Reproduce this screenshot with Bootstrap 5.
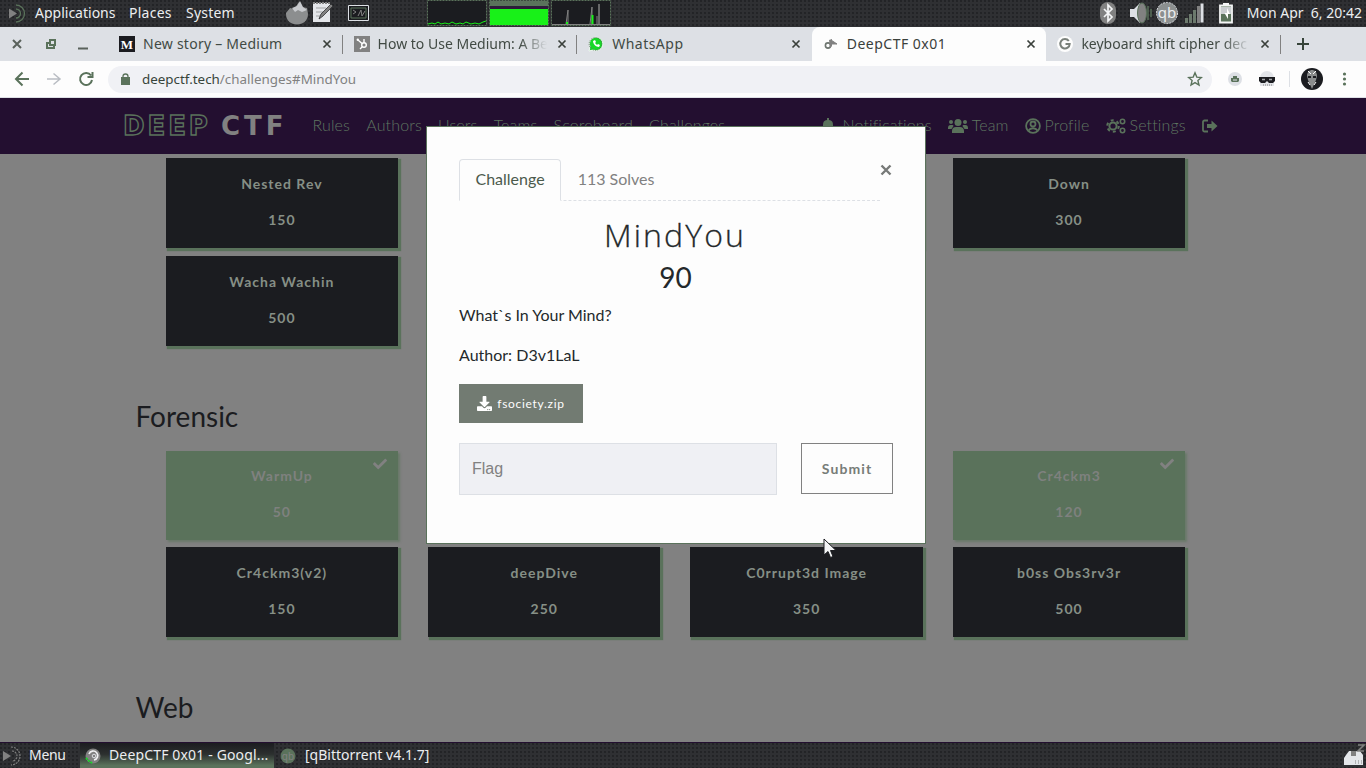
<!DOCTYPE html>
<html lang="en">
<head>
<meta charset="utf-8">
<title>DeepCTF 0x01</title>
<link href="https://cdn.jsdelivr.net/npm/bootstrap@5.3.0/dist/css/bootstrap.min.css" rel="stylesheet">
<script src="https://cdn.jsdelivr.net/npm/bootstrap@5.3.0/dist/js/bootstrap.bundle.min.js"></script>
<style>
:root{--ink:#1b1c20;--panel:#2f3033;--strip:#dde0e5;--dim:#818181;--moss:#5a725b;--plum:#230f30;--paper:#fdfdfd}
body{width:1366px;height:768px;overflow:hidden;background:var(--dim);font-family:Lato,sans-serif;color:var(--ink);line-height:1.5;position:relative}
svg{display:block;flex:none}
.sysfont{font-family:"Noto Sans",sans-serif}
.desk-panel{background-color:var(--panel);background-image:radial-gradient(circle at 1px 1px,#222326 .7px,transparent .9px);background-size:4px 4px;color:#eceef0;font-size:14px;line-height:20px;white-space:nowrap}
.top-panel{height:27px;padding:0 4px 2px 7px}
.menu-a{width:94px}.menu-b{width:57px;letter-spacing:.25px}.menu-c{width:100px;letter-spacing:.2px}
.graphs{margin-left:57px}
.tray{margin-left:auto;margin-right:13px}

.tab-strip{height:34px;background:var(--strip);font-size:14px;line-height:20px;color:#414a44;white-space:nowrap}
.tab-item{width:234.6px;height:34px;padding-left:11px;gap:8px;position:relative}
.tab-item .tab-text{width:169px;overflow:hidden;padding-bottom:1px}
.tab-item .tab-close{margin-left:2px}
.tab-item.ruled::after{content:"";position:absolute;right:0;top:8px;width:1px;height:19px;background:var(--dim)}
.tab-active{background:var(--paper);border-radius:8px 8px 0 0;color:#3a403b}
.wide-a{letter-spacing:.25px}.wide-b{letter-spacing:.48px}
.fade-end{-webkit-mask-image:linear-gradient(90deg,#000 84%,transparent);mask-image:linear-gradient(90deg,#000 84%,transparent)}

.toolbar{height:37px;background:var(--paper);border-bottom:1px solid var(--strip);font-size:13.4px}
.omni{width:1104px;height:27px;border-radius:14px;background:#f0f1f5;color:var(--dim);line-height:20px;padding-left:13px;padding-right:9px}
.omni .url{margin-left:12px}
.omni .host{color:#37443a}

.view{height:644px;overflow:hidden}
.site-nav{height:56px;background:var(--plum);color:#5f7660;font-size:16px;line-height:24px;font-weight:300;white-space:nowrap;letter-spacing:.14px;padding-bottom:2px}
.site-logo{width:312.5px;padding:2px 0 0 123px;font:700 26px/28px "DejaVu Sans",sans-serif}
.logo-deep{width:98px;letter-spacing:2.9px;color:transparent;-webkit-text-stroke:1.4px var(--moss)}
.logo-ctf{letter-spacing:4px;color:var(--dim)}
.nav-main{gap:16.2px;width:508px}
.nav-right svg{margin-top:1px}
.bell-gap{margin-left:8px}.gears{margin-left:16px}

.board{padding-left:150.7px;width:1201px;flex-wrap:nowrap}
.cell{width:262.4px;padding:0 15px}
.tile{height:90px;background:var(--ink);color:#868f86;box-shadow:2px 2px 1px 1px var(--moss);font-weight:700;font-size:14px;letter-spacing:1px;line-height:20px;padding-top:16px;text-align:center;margin-bottom:8px}
.tile p{margin:0 0 16px}
.tile-done{background:var(--moss);color:#7f817f;position:relative;height:89px;margin-bottom:7px;padding-top:15px;box-shadow:2px 2px 2px #697969}
.tile-done svg{position:absolute;right:11px;top:6px}
.cat{font-size:28px;line-height:34px;margin:45px 0 18px 135.5px;font-weight:400}

.chal{position:absolute;left:427px;top:127px;width:498px;height:416px;background:var(--paper);border-radius:0;border:0;box-shadow:0 0 0 1px var(--moss);padding:32px;color:#24292b}
.chal .nav-tabs{width:421px;border-bottom:1px dashed var(--strip);height:42px}
.chal .nav-link{height:42px;padding:7px 15.5px;color:var(--dim);line-height:24px;font-size:16px;border-radius:4px 4px 0 0}
.chal .nav-link.active{color:#4b5a4c;background:var(--paper);border:1px solid var(--strip);border-bottom-color:var(--paper)}
.close-x{position:absolute;right:33px;top:37px}
.ttl{font:300 32px/40px "Open Sans",sans-serif;letter-spacing:2.1px;margin:14px 0 5px;padding-right:2px;-webkit-text-stroke:.3px #24292b}
.pts{font-size:28px;line-height:34px;margin-bottom:9px;font-weight:400;padding-right:1px}
.chal p{font-size:16px;line-height:24px;margin-bottom:16px}
.dl{background:#727b72;color:var(--paper);width:124px;height:39px;font-size:12px;letter-spacing:.7px;gap:5px;margin:17px 0 20px}
.flag-input{width:318px;height:52px;background:#eff0f4;border:1px solid var(--strip);border-radius:0;padding:0 12px;font:16px/24px "Liberation Sans",sans-serif}
.flag-input::placeholder{color:var(--dim)}
.send{width:92px;height:51px;border:1px solid var(--dim);border-radius:0;color:#777c78;font-weight:700;font-size:14px;letter-spacing:1.1px;padding:0}
.pointer{position:absolute;left:822.500px;top:537.500px}

.bottom-panel{height:26px;border-top:1px solid var(--plum)}
.bottom-panel .lbl{padding-bottom:2px}
.task-menu{width:51px;letter-spacing:-.3px}
.task{width:194px;height:25px;padding-left:5px;gap:8px;letter-spacing:.15px;background:linear-gradient(#1b1c20,#2c302f 45%,#5a725b 90%)}
.task-b{margin-left:6px;gap:9px}
</style>
</head>
<body>

<div class="desk-panel top-panel sysfont d-flex align-items-center">
  <svg width="28" height="20" viewBox="0 0 28 20"><path d="M2 5.500v10l8-5z" fill="#818181"/><path d="M9 2a8 8 0 1 1 0 17M9 6a4.500 4.500 0 1 1 0 9" fill="none" stroke="#5a725b" stroke-width="1.300"/></svg>
  <div class="menu-a">Applications</div><div class="menu-b">Places</div><div class="menu-c">System</div>
  <svg width="84" height="26" viewBox="286 0 84 26"><path d="M286 13l4-5 4 1 5-7 3 5 5 1 1 6c0 14-22 14-22 0z" fill="#8c8e8f"/><path d="M292 8l5-2 3-5 3 6 4 3-5 2-4-2-3 2z" fill="#c8cace"/><path d="M313 3h17v19h-17z" fill="#e4e6ea"/><path d="M313 3h17" stroke="#818181" stroke-width="2" stroke-dasharray="2 1"/><path d="M316 8h10m-10 4h7m-7 4h4" stroke="#a0a2a4"/><path d="M319 19l2-5 10-10 2 2-10 10z" fill="#818181" stroke="#2d2e31" stroke-width=".8"/><path d="M348.500 5.500h20v15h-20z" fill="#1b1c20" stroke="#dde0e5"/><path d="M351 8h15v10h-15z" fill="none" stroke="#5a725b"/><path d="M353 10l3 2-3 2m5 2l3-6 1 6 3-5" stroke="#818181" fill="none"/></svg>
  <svg class="graphs" width="184" height="26" viewBox="427 0 184 26"><path d="M427.500.5h59v25h-59zM489.500.5h59v25h-59zM551.500.5h59v25h-59z" fill="#1b1c20" stroke="#5a725b" stroke-dasharray="2 1"/><path d="M490 1h58v5h-58z" fill="#5a725b"/><path d="M490 6h58v3h-58z" fill="#2c1b39"/><path d="M490 9h58v16h-58z" fill="#18f118"/><path d="M428 24l4-1 3 1 3-2 3 2 4-1 4 1 3-2 4 2 4-1 3 1 3-2 5 2 4-1 4 1 4-2 3-1" stroke="#18f118" fill="none"/><path d="M552 24.500h58M566 24l2-14v14m22 0l2-17v17m5 0v-8m2 8V4v20" stroke="#818181" fill="none"/><path d="M591.500 15h2v9h-2zM566 22h2v2h-2z" fill="#18f118"/></svg>
  <svg class="tray" width="136" height="26" viewBox="1098 0 136 26">
    <rect x="1100" y="2" width="16" height="22" rx="8" fill="#818181"/><path d="M1104 9l8 8-4 4V5l4 4-8 8" fill="none" stroke="#f4f5f6" stroke-width="1.700"/>
    <path d="M1130 9h4l6-6v20l-6-6h-4z" fill="#dde0e5"/><ellipse cx="1142" cy="13" rx="4.500" ry="10" fill="#818181" stroke="#5a725b"/><path d="M1148 6v14m3-11v8" stroke="#5a725b" stroke-width="1.400"/>
    <circle cx="1167" cy="13" r="10.500" fill="#8c9090" stroke="#dde0e5" stroke-dasharray="2 1"/><text x="1167" y="18" text-anchor="middle" font-family="Noto Sans" font-size="15" fill="#eceef0">qb</text>
    <path d="M1185 18h3v5h-3zM1189 14h3v9h-3zM1193 10h3v13h-3z" fill="#6c7a6d"/><path d="M1197 6h3v17h-3z" fill="#818181"/><path d="M1200.500 3.500h3v19h-3z" fill="#dde0e5"/>
    <path d="M1220 5.500h12v17h-12z" fill="#5a725b" stroke="#f4f5f6" stroke-width="1.800"/><path d="M1223 3h6v2h-6z" fill="#f4f5f6"/><path d="M1221 7h10v7h-10z" fill="#c9ccd0"/><path d="M1227 8v5h-2.500l3.500 6v-5h2z" fill="#fff"/>
  </svg>
  <div>Mon Apr&nbsp; 6, 20:42</div>
</div>

<div class="tab-strip sysfont d-flex">
  <svg width="108" height="34" viewBox="0 27 108 34"><path d="M13 40l8 8m0-8l-8 8M78 48.500h10" stroke="#5a625c" stroke-width="2"/><path d="M50 40h5v5h-5zM49 43h-2v5h7v-2" fill="none" stroke="#5a725b" stroke-width="2"/></svg>
  <div class="tab-item ruled d-flex align-items-center"><svg width="16" height="16"><path d="M0 0h16v16H0z" fill="#1b1c20"/><text x="8" y="12.500" font-family="Liberation Serif" font-weight="bold" font-size="13" text-anchor="middle" fill="#fff">M</text></svg><div class="tab-text wide-a">New story – Medium</div><svg class="tab-close" width="10" height="10"><path d="M1.500 1.500l7 7m0-7l-7 7" stroke="#3a403b" stroke-width="1.700"/></svg></div>
  <div class="tab-item ruled d-flex align-items-center"><svg width="16" height="16"><path d="M0 0h16v16H0z" fill="#818181"/><circle cx="10" cy="9" r="2.300" fill="none" stroke="#fff" stroke-width="1.400"/><path d="M10 6.500V3M4 4l4 3.500M8.500 10.500L6 13" stroke="#fff" stroke-width="1.400"/><circle cx="3.800" cy="3.800" r="1.200" fill="#fff"/></svg><div class="tab-text fade-end">How to Use Medium: A Be</div><svg class="tab-close" width="10" height="10"><path d="M1.500 1.500l7 7m0-7l-7 7" stroke="#3a403b" stroke-width="1.700"/></svg></div>
  <div class="tab-item d-flex align-items-center"><svg width="16" height="16"><path d="M1 15l1-4A6.800 6.800 0 1 1 5 14z" fill="#18d828" stroke="#f5f6f7"/><path d="M2 11A6.300 6.300 0 1 1 5 13.700z" fill="none" stroke="#5a725b" stroke-dasharray="1 1"/><path d="M5 5c0 3 3 6 6 6l1-2-2-1-1 1-2-2 1-1-1-2z" fill="#fff"/></svg><div class="tab-text wide-b">WhatsApp</div><svg class="tab-close" width="10" height="10"><path d="M1.500 1.500l7 7m0-7l-7 7" stroke="#3a403b" stroke-width="1.700"/></svg></div>
  <div class="tab-item tab-active d-flex align-items-center"><svg width="16" height="16"><circle cx="5" cy="9.500" r="2.600" fill="none" stroke="#6e756f" stroke-width="1.600"/><path d="M6 4l3-1v7l-2 2" fill="#818181"/><path d="M8 4l6 4H9z" fill="#818181" stroke="#818181"/></svg><div class="tab-text wide-b">DeepCTF 0x01</div><svg class="tab-close" width="10" height="10"><path d="M1.500 1.500l7 7m0-7l-7 7" stroke="#3a403b" stroke-width="1.700"/></svg></div>
  <div class="tab-item ruled d-flex align-items-center"><svg width="16" height="16"><circle cx="8" cy="8" r="8" fill="#fdfdfd"/><path d="M11.800 5A4.700 4.700 0 1 0 12.700 8H8.500" fill="none" stroke="#7a817b" stroke-width="2"/></svg><div class="tab-text fade-end">keyboard shift cipher dec</div><svg class="tab-close" width="10" height="10"><path d="M1.500 1.500l7 7m0-7l-7 7" stroke="#3a403b" stroke-width="1.700"/></svg></div>
  <svg class="ms-3 mt-2" width="12" height="18"><path d="M6 3v12M0 9h12" stroke="#37443a" stroke-width="2"/></svg>
</div>

<div class="toolbar sysfont d-flex align-items-center">
  <svg width="108" height="36" viewBox="0 61 108 36" fill="none" stroke="#5a725b" stroke-width="2"><path d="M29 79H16m6.500-6.500L16 79l6.500 6.500"/><path d="M47 79h12m-5.500-5.500L60 79l-6.500 5.500" stroke="#b9bdc3" stroke-width="1.500"/><path d="M91 75.500A6 6 0 1 0 92 80M92.500 72v5h-5"/></svg>
  <div class="omni d-flex align-items-center">
    <svg width="9" height="12"><path d="M0 4h9v8H0z" fill="#5a725b"/><path d="M2 5V3.500a2.500 2.500 0 0 1 5 0V5" fill="none" stroke="#5a725b" stroke-width="1.300"/></svg>
    <div class="url me-auto"><span class="host">deepctf.tech</span>/challenges#MindYou</div>
    <svg width="16" height="16"><path d="M8 1.800l1.800 4.300 4.600.4-3.500 3 1.100 4.500L8 11.600 4 14l1.100-4.500-3.500-3 4.600-.4z" fill="none" stroke="#5a725b" stroke-width="1.400"/></svg>
  </div>
  <svg width="154" height="36" viewBox="1212 61 154 36"><circle cx="1235" cy="79" r="7" fill="#dde0e5"/><path d="M1231 78h8v3l-1 1h-6l-1-1zM1233 76h4v2h-4z" fill="#5a725b"/><path d="M1233 80h4" stroke="#dde0e5"/><path d="M1260 79v-1a7 7 0 0 1 14 0v8h-14z" fill="#e3e5e9"/><path d="M1259 77h16v4l-2 2h-4l-2-2-2 2h-4l-2-2z" fill="#1b1c20"/><path d="M1262 79.500h3m4 0h3" stroke="#a5a7aa" stroke-width="1.500"/><path d="M1263 85h9" stroke="#818181" stroke-dasharray="1 1"/><path d="M1289.500 71v16" stroke="#dde0e5"/><circle cx="1312" cy="79" r="11" fill="#1b1c20"/><path d="M1307 76c0-8 10-8 10 0l-1 4-4 9-4-9z" fill="#8a8c8c"/><path d="M1308 71l3 3m2 0l3-3m-8 11l2 3m4 0l2-3" stroke="#fdfdfd"/><path d="M1308 77h3m2 0h3" stroke="#1b1c20" stroke-width="2"/><g fill="#5a725b"><circle cx="1344.500" cy="74" r="1.600"/><circle cx="1344.500" cy="79" r="1.600"/><circle cx="1344.500" cy="84" r="1.600"/></g></svg>
</div>

<main class="view">
  <nav class="site-nav d-flex align-items-center">
    <div class="site-logo d-flex"><span class="logo-deep">DEEP</span><span class="logo-ctf">CTF</span></div>
    <div class="nav-main d-flex"><span>Rules</span><span>Authors</span><span>Users</span><span>Teams</span><span>Scoreboard</span><span>Challenges</span></div>
    <div class="nav-right d-flex align-items-center">
      <svg width="14" height="16" viewBox="0 0 14 16"><path d="M6 0h2v2c3 .5 4 2 4 5 0 2 .5 3.500 2 5H0c1.500-1.500 2-3 2-5 0-3 1-4.500 4-5zM5 13h4a2 2 0 0 1-4 0z" fill="#5a725b"/></svg><span class="bell-gap">Notifications</span>
      <svg class="ms-3" width="20" height="16" viewBox="0 0 20 16" fill="#5a725b"><circle cx="10" cy="4.500" r="3.500"/><circle cx="3" cy="4" r="2"/><circle cx="17" cy="4" r="2"/><path d="M4 15v-2c0-2.500 1.500-4 4-4h4c2.500 0 4 1.500 4 4v2zM0 10c0-2 1-3 2.500-3H4c1 0 1.500.5 1.500 1L3.500 11H0zm20 0c0-2-1-3-2.500-3H16c-1 0-1.500.5-1.500 1l2 3H20z"/></svg><span class="ms-1">Team</span>
      <svg class="ms-3" width="16" height="16" viewBox="0 0 16 16" fill="none" stroke="#5a725b" stroke-width="1.800"><circle cx="8" cy="8" r="6.900"/><circle cx="8" cy="6" r="2.500"/><path d="M3.500 12.500c2-3 7-3 9 0"/></svg><span class="ms-1">Profile</span>
      <svg class="gears" width="20" height="16" viewBox="0 0 20 16" fill="none" stroke="#5a725b"><circle cx="7" cy="8" r="3.600" stroke-width="2"/><circle cx="7" cy="8" r="5.800" stroke-width="2" stroke-dasharray="3 3.070"/><circle cx="16.500" cy="3.500" r="2.200" stroke-width="1.600"/><circle cx="16.500" cy="12.500" r="2.200" stroke-width="1.600"/></svg><span class="ms-1">Settings</span>
      <svg class="ms-3" width="16" height="14" viewBox="0 0 16 14"><path d="M6 1.500H2.500a1.500 1.500 0 0 0-1.500 1.500v8a1.500 1.500 0 0 0 1.500 1.500H6" fill="none" stroke="#5a725b" stroke-width="1.800"/><path d="M5 5h4.500V1.500L15.500 7l-6 5.500V9H5z" fill="#5a725b"/></svg>
    </div>
  </nav>

  <div class="board d-flex pt-1">
    <div class="cell"><div class="tile"><p>Nested Rev</p><p>150</p></div></div>
    <div class="cell"><div class="tile"></div></div>
    <div class="cell"><div class="tile"></div></div>
    <div class="cell"><div class="tile"><p>Down</p><p>300</p></div></div>
  </div>
  <div class="board d-flex">
    <div class="cell"><div class="tile"><p>Wacha Wachin</p><p>500</p></div></div>
  </div>

  <h3 class="cat">Forensic</h3>
  <div class="board d-flex">
    <div class="cell"><div class="tile tile-done"><svg width="14" height="14" viewBox="0 0 512 512"><path fill="#818181" d="M173.900 439.400l-166.400-166.400c-10-10-10-26.200 0-36.200l36.200-36.200c10-10 26.200-10 36.200 0L192 312.700 432.100 72.600c10-10 26.200-10 36.200 0l36.200 36.200c10 10 10 26.200 0 36.200l-294.400 294.400c-10 10-26.200 10-36.200 0z"/></svg><p>WarmUp</p><p>50</p></div></div>
    <div class="cell"></div>
    <div class="cell"></div>
    <div class="cell"><div class="tile tile-done"><svg width="14" height="14" viewBox="0 0 512 512"><path fill="#818181" d="M173.900 439.400l-166.400-166.400c-10-10-10-26.200 0-36.200l36.200-36.200c10-10 26.200-10 36.200 0L192 312.700 432.100 72.600c10-10 26.200-10 36.200 0l36.200 36.200c10 10 10 26.200 0 36.200l-294.400 294.400c-10 10-26.200 10-36.200 0z"/></svg><p>Cr4ckm3</p><p>120</p></div></div>
  </div>
  <div class="board d-flex">
    <div class="cell"><div class="tile"><p>Cr4ckm3(v2)</p><p>150</p></div></div>
    <div class="cell"><div class="tile"><p>deepDive</p><p>250</p></div></div>
    <div class="cell"><div class="tile"><p>C0rrupt3d Image</p><p>350</p></div></div>
    <div class="cell"><div class="tile"><p>b0ss Obs3rv3r</p><p>500</p></div></div>
  </div>
  <h3 class="cat">Web</h3>
</main>

<footer class="desk-panel bottom-panel sysfont d-flex align-items-center">
  <svg class="me-1" width="25" height="22" viewBox="0 0 25 22"><path d="M3 6v10l8-5z" fill="#818181"/><path d="M11 2a9 9 0 1 1 0 18M12 6a5 5 0 1 1 0 10" fill="none" stroke="#818181" stroke-width="1.200" stroke-dasharray="2 1"/></svg>
  <div class="task-menu lbl">Menu</div>
  <div class="task d-flex align-items-center"><svg width="16" height="16"><circle cx="8" cy="8" r="7.500" fill="#818181"/><path d="M4 6a4.500 4.500 0 1 1 5 6" fill="none" stroke="#f0f1f3" stroke-width="1.600"/><circle cx="9" cy="8" r="1.800" fill="none" stroke="#dde0e5"/><path d="M1 10l3 3 3 2" stroke="#18d828" stroke-width="2" stroke-dasharray="2 1"/></svg><span class="lbl">DeepCTF 0x01 - Googl...</span></div>
  <div class="task-b d-flex align-items-center"><svg width="16" height="16"><circle cx="8" cy="8" r="7.500" fill="#5a725b"/><text x="8" y="11.500" text-anchor="middle" font-family="Noto Sans" font-size="10" fill="#818181">qb</text></svg><span class="lbl">[qBittorrent v4.1.7]</span></div>
  <svg class="ms-auto" width="24" height="26" viewBox="0 0 24 26"><path d="M4 12l3-4h11l3 4v10H2v-7z" fill="#e4e6ea"/><path d="M9 8h5v5H9z" fill="#818181"/><path d="M13 18h7m-7 2h7" stroke="#818181" stroke-dasharray="1 2"/><path d="M16 2h6l-6 6h6" fill="none" stroke="#818181" stroke-width="1.600"/></svg>
</footer>

<section class="modal-content chal d-block">
  <ul class="nav nav-tabs">
    <li class="nav-item"><a class="nav-link active">Challenge</a></li>
    <li class="nav-item"><a class="nav-link">113 Solves</a></li>
  </ul>
  <svg class="close-x" width="12" height="12"><path d="M1.500 1.500l9 9m0-9l-9 9" stroke="#777a78" stroke-width="2.400"/></svg>
  <h2 class="ttl text-center">MindYou</h2>
  <h3 class="pts text-center">90</h3>
  <p>What`s In Your Mind?</p>
  <p>Author: D3v1LaL</p>
  <a class="dl d-flex align-items-center justify-content-center text-decoration-none"><svg width="15" height="15" viewBox="0 0 512 512"><path fill="#fff" d="M216 0h80c13.300 0 24 10.700 24 24v168h87.700c17.800 0 26.700 21.500 14.100 34.100L269.700 378.300c-7.500 7.500-19.800 7.500-27.300 0L90.100 226.100c-12.600-12.600-3.700-34.100 14.100-34.100H192V24c0-13.300 10.700-24 24-24zm296 376v112c0 13.300-10.700 24-24 24H24c-13.300 0-24-10.700-24-24V376c0-13.300 10.700-24 24-24h146.700l49 49c20.100 20.100 52.500 20.100 72.600 0l49-49H488c13.300 0 24 10.700 24 24zm-124 88c0-11-9-20-20-20s-20 9-20 20 9 20 20 20 20-9 20-20zm64 0c0-11-9-20-20-20s-20 9-20 20 9 20 20 20 20-9 20-20z"/></svg><span>fsociety.zip</span></a>
  <div class="d-flex gap-4"><input class="form-control flag-input" placeholder="Flag"><button class="btn send">Submit</button></div>
</section>
<svg class="pointer" width="14" height="22" viewBox="0 0 14 22"><path d="M1 1v16l4-3.500 2.500 6 2.500-1-2.500-6H13z" fill="#f4f5f6" stroke="#1b1c20"/></svg>
</body>
</html>
